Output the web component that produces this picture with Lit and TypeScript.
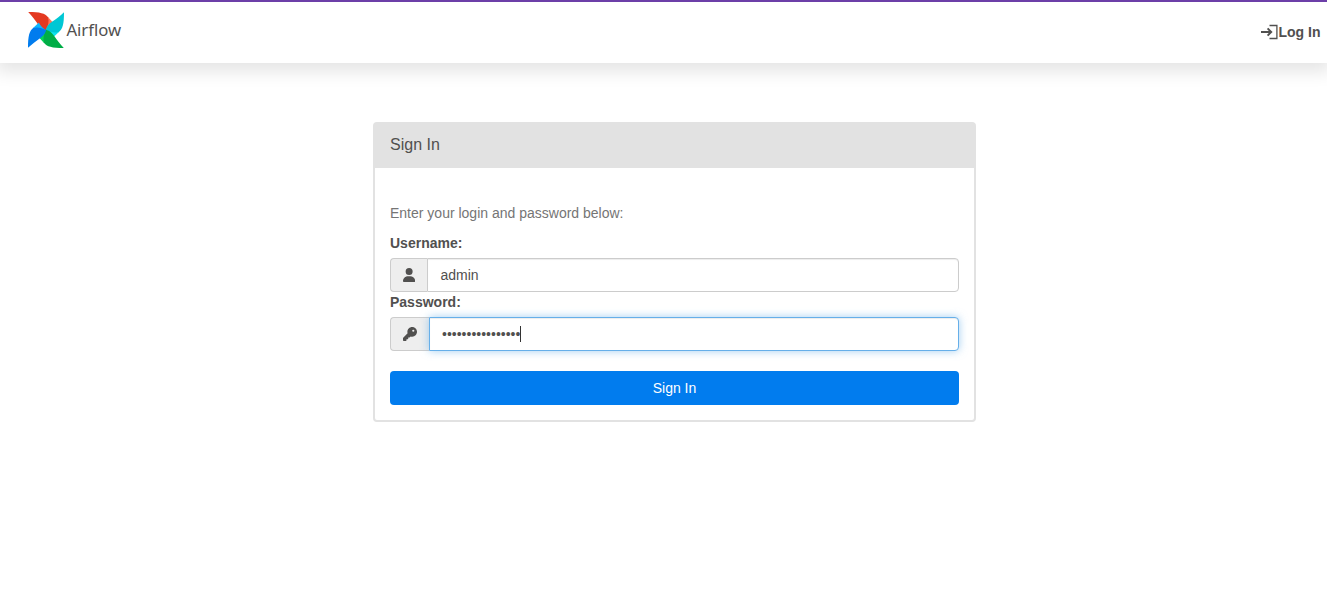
import { LitElement, html, css, svg } from "lit";
import { customElement } from "lit/decorators.js";

// Each blade of the pinwheel: body colour, fold colour, rotation about the hub.
const blades: [string, string, number][] = [
  ["#e43921", "#ff7557", 0],
  ["#00c7d4", "#11e1ee", 90],
  ["#00ad46", "#04d659", 180],
  ["#017cee", "#0cb6ff", 270],
];

@customElement("app-root")
export class AppRoot extends LitElement {
  static styles = css`
    :host {
      display: block;
      height: 616px;
      overflow: hidden;
      background: #fff;
      color: #51504f;
      font: 14px/20px "Liberation Sans", Arial, sans-serif;
    }
    * { box-sizing: border-box; }
    svg { display: block; flex: none; }
    .nav {
      display: flex;
      justify-content: space-between;
      height: 63px;
      border-top: 2px solid #6c3fa8;
      background: #fff;
      box-shadow: 0 5px 16px 4px rgba(0, 0, 0, 0.1);
    }
    .brand { display: flex; padding: 10px 0 0 28px; }
    .name {
      margin: 6px 0 0 2.4px;
      font: 16.7px/24px "Noto Sans", sans-serif;
    }
    .login {
      display: flex;
      padding: 20px 6.5px 0 0;
      font-weight: 700;
    }
    .login svg { margin-top: 2px; }
    .panel {
      width: 603px;
      height: 300px;
      margin: 59px 0 0 373px;
      border: 2px solid #e2e2e2;
      border-radius: 4px;
    }
    .head {
      height: 44px;
      padding: 11px 15px 0;
      background: #e2e2e2;
      font-size: 16px;
    }
    .body { padding: 35px 15px 0; }
    .help { color: #757575; margin-bottom: 10px; }
    .label { font-weight: 700; height: 25px; }
    .group { display: flex; height: 34px; }
    .addon {
      display: flex;
      align-items: center;
      justify-content: center;
      width: 37px;
      background: #eee;
      border: 1px solid #ccc;
      border-right: 0;
      border-radius: 4px 0 0 4px;
    }
    .wide { width: 39px; }
    .field {
      flex: 1;
      display: flex;
      align-items: center;
      padding: 0 12px 0 12.5px;
      background: #fff;
      border: 1px solid #ccc;
      border-radius: 0 4px 4px 0;
      box-shadow: inset 0 1px 1px rgba(0, 0, 0, 0.075);
    }
    .focus {
      padding-left: 12px;
      border-color: #66afe9;
      box-shadow: inset 0 1px 1px rgba(0, 0, 0, 0.075), 0 0 8px rgba(102, 175, 233, 0.6);
    }
    .caret { width: 1px; height: 16px; background: #333; }
    .submit {
      display: block;
      width: 100%;
      height: 34px;
      margin-top: 20px;
      padding: 0;
      border: 0;
      border-radius: 4px;
      background: #017cee;
      color: #fff;
      font: inherit;
    }
  `;

  render() {
    return html`
      <header class="nav">
        <div class="brand">
          <svg width="36" height="36" viewBox="0 0 36 36">
            ${blades.map(
              ([body, fold, angle]) => svg`
                <g transform="rotate(${angle} 18 18)">
                  <path fill=${body} d="M.2 0C12 0 17 1.2 20.3 5.5C23 9 20.8 14 18 18.2C14 17 12.5 15.5 9.8 12C7 8 4 4 .2 0Z"></path>
                  <path fill=${fold} d="M20 5.1L25.4 10.9C21.7 12.5 19.3 15 18 18.2C20.2 13.5 21.3 9.5 20 5.1Z"></path>
                </g>`
            )}
          </svg>
          <span class="name">Airflow</span>
        </div>
        <div class="login">
          <svg width="18" height="16" viewBox="0 0 18 16" fill="none" stroke="#51504f">
            <path stroke-width="2" d="M-.5 8H10M6.6 4.4L10.2 8L6.6 11.6"></path>
            <path stroke-width="1.3" d="M8.5 1.5H15.9V14.5H8.5"></path>
          </svg>
          <span>Log In</span>
        </div>
      </header>
      <main class="panel">
        <div class="head">Sign In</div>
        <div class="body">
          <div class="help">Enter your login and password below:</div>
          <div class="label">Username:</div>
          <div class="group">
            <span class="addon">
              <svg width="12.25" height="14" viewBox="0 0 448 512" fill="#51504f">
                <path d="M224 256A128 128 0 1 0 224 0a128 128 0 1 0 0 256zm-45.7 48C79.8 304 0 383.8 0 482.3C0 498.7 13.3 512 29.7 512H418.3c16.4 0 29.7-13.3 29.7-29.7C448 383.8 368.2 304 269.7 304H178.3z"></path>
              </svg>
            </span>
            <div class="field">admin</div>
          </div>
          <div class="label">Password:</div>
          <div class="group">
            <span class="addon wide">
              <svg width="14" height="14" viewBox="0 0 512 512" fill="#51504f">
                <path d="M336 352c97.2 0 176-78.8 176-176S433.2 0 336 0S160 78.8 160 176c0 18.7 2.9 36.8 8.3 53.7L7 391c-4.5 4.5-7 10.6-7 17v80c0 13.3 10.7 24 24 24h80c13.3 0 24-10.7 24-24V448h40c13.3 0 24-10.7 24-24V384h40c6.4 0 12.5-2.5 17-7l33.3-33.3c16.9 5.4 35 8.3 53.7 8.3zM376 96a40 40 0 1 1 0 80 40 40 0 1 1 0-80z"></path>
              </svg>
            </span>
            <div class="field focus"><span>••••••••••••••••</span><span class="caret"></span></div>
          </div>
          <button class="submit">Sign In</button>
        </div>
      </main>
    `;
  }
}
